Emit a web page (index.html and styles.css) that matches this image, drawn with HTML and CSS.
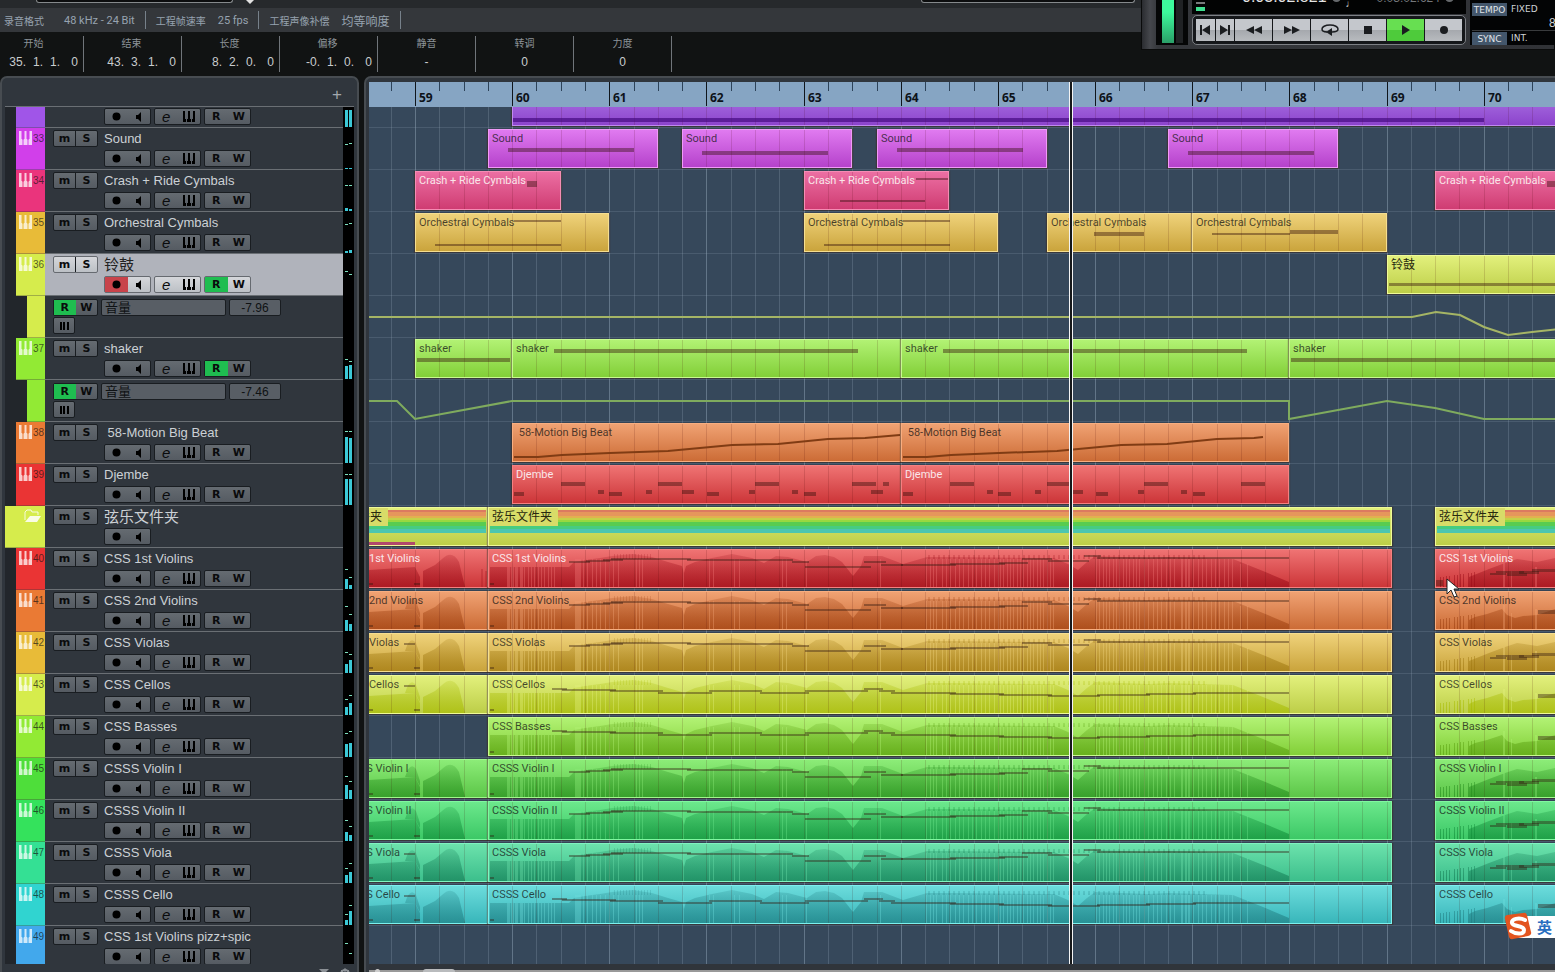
FILE: index.html
```
<!DOCTYPE html>
<html lang="zh-CN">
<head>
    <meta charset="UTF-8">
    <meta name="viewport" content="width=device-width, initial-scale=1.0">
    <title>Project</title>
    <link rel="stylesheet" href="styles.css">
</head>
<body>
    <header class="toolbar">
        <div class="toolbar-box"></div>
        <span class="toolbar-arrow"></span>
        <div class="toolbar-box toolbar-box-right"></div>
    </header>
    <div class="status">
        <div class="status-item"><span class="status-label">录音格式</span><span>48 kHz - 24 Bit</span></div>
        <div class="status-item"><span class="status-label">工程帧速率</span><span>25 fps</span></div>
        <div class="status-item"><span class="status-label">工程声像补偿</span><span class="status-cjk">均等响度</span></div>
    </div>
    <div class="info">
        <div class="info-item"><span class="info-label">开始</span><div class="pos"><span>35.</span><span>1.</span><span>1.</span><span>0</span></div></div>
        <div class="info-item"><span class="info-label">结束</span><div class="pos"><span>43.</span><span>3.</span><span>1.</span><span>0</span></div></div>
        <div class="info-item"><span class="info-label">长度</span><div class="pos"><span>8.</span><span>2.</span><span>0.</span><span>0</span></div></div>
        <div class="info-item"><span class="info-label">偏移</span><div class="pos"><span>-0.</span><span>1.</span><span>0.</span><span>0</span></div></div>
        <div class="info-item"><span class="info-label">静音</span><div>-</div></div>
        <div class="info-item"><span class="info-label">转调</span><div>0</div></div>
        <div class="info-item"><span class="info-label">力度</span><div>0</div></div>
    </div>

    <main class="project">
        <section class="panel track-panel">
            <div class="track-head"><button class="add" aria-label="Add track">+</button></div>
            <div class="scroll"><div class="rows" id="tracks"></div></div>
            <div class="track-foot">
                <svg width="10" height="6"><path d="M0 1h10l-5 5z" fill="#8b9095"/></svg>
                <svg width="12" height="12" viewBox="0 0 12 12"><circle cx="6" cy="6" r="4" fill="none" stroke="#8b9095" stroke-width="2"/><path d="M6 0v12M0 6h12M2 2l8 8M10 2l-8 8" stroke="#8b9095"/><circle cx="6" cy="6" r="2" fill="#33383d"/></svg>
            </div>
        </section>
        <section class="panel event-panel">
            <svg class="ruler" id="ruler"></svg>
            <div class="scroll">
                <svg class="grid" id="grid"></svg>
                <div class="rows" id="lanes"></div>
            </div>
            <div class="hscroll"><span class="knob"></span><span class="thumb"></span></div>
            <div class="playhead"></div>
        </section>
    </main>

    <aside class="transport">
        <div class="level"><span class="level-bar"></span><span class="level-side"></span></div>
        <div class="transport-main">
            <div class="time">
                <span class="time-led"></span>
                <span class="time-big">0:03:02.821</span><span class="dot"></span>
                <span class="note">♩</span>
                <span class="time-small">0:03:02.624</span><span class="dot"></span>
            </div>
            <div class="buttons">
                <button class="narrow" aria-label="To start"><svg width="12" height="12"><path d="M1 1h2v10H1zM11 1v10L3 6z"/></svg></button>
                <button class="narrow" aria-label="To end"><svg width="12" height="12"><path d="M9 1h2v10H9zM1 1v10l8-5z"/></svg></button>
                <button aria-label="Rewind"><svg width="18" height="12"><path d="M9 2v8L1 6zM17 2v8L9 6z"/></svg></button>
                <button aria-label="Forward"><svg width="18" height="12"><path d="M1 2v8l8-4zM9 2v8l8-4z"/></svg></button>
                <button aria-label="Cycle"><svg width="18" height="14"><path d="M6 9C3 9 1 8 1 6s3-4 8-4 8 2 8 4-2 3-6 3" fill="none" stroke="#1b1d20" stroke-width="1.5"/><path d="M11 5v8L5 9z"/></svg></button>
                <button aria-label="Stop"><svg width="8" height="8"><path d="M0 0h8v8H0z"/></svg></button>
                <button class="play" aria-label="Play"><svg width="8" height="10"><path d="M0 0v10l8-5z"/></svg></button>
                <button aria-label="Record"><svg width="10" height="10"><circle cx="5" cy="5" r="4"/></svg></button>
            </div>
        </div>
        <div class="tempo">
            <div class="tempo-row"><button>TEMPO</button><span>FIXED</span></div>
            <div class="tempo-value">80.000</div>
            <div class="tempo-row sync"><button>SYNC</button><span>INT.</span></div>
        </div>
    </aside>

    <svg class="cursor" width="14" height="20"><path d="M1 1v15l4-4 3 7 3-1-3-7h5z" fill="#fff" stroke="#222"/></svg>
    <div class="ime">
        <svg width="28" height="28" viewBox="0 0 28 28"><path d="M3 3Q0 4 1 7l4 18q1 3 4 2l15-3q4-1 3-4L23 3q-1-3-4-2z" fill="#e3541f"/><path d="M21 8C15 5 7 7 8 11s12 2 12 7-9 4-13 1" fill="none" stroke="#fff" stroke-width="4" stroke-linecap="round"/></svg>
        <span>英</span>
    </div>
    <script src="script.js"></script>
</body>
</html>
```
FILE: styles.css
```
* {
    box-sizing: border-box;
}
body {
    margin: 0;
    height: 100vh;
    overflow: hidden;
    display: flex;
    flex-direction: column;
    background-color: #111313;
    color: #c3c8cc;
    font-family: "Liberation Sans", "Noto Sans CJK SC", sans-serif;
    font-size: 12px;
}
button, input, select {
    font: inherit;
    color: inherit;
    margin: 0;
    padding: 0;
    border: none;
    background: none;
    appearance: none;
}
.toolbar {
    height: 8px;
    flex: none;
    display: flex;
    align-items: flex-start;
    padding-left: 36px;
    background-color: #26292c;
}
.toolbar-box {
    width: 197px;
    height: 3px;
    border: 1px solid #85898c;
    border-top: none;
    border-radius: 0 0 5px 5px;
    background-color: #0c0d0e;
}
.toolbar-box-right {
    width: 214px;
    margin-left: 667px;
}
.toolbar-arrow {
    margin-left: 13px;
    border: 4px solid transparent;
    border-top-color: #e2e2e2;
    border-bottom: none;
}
.status {
    height: 24px;
    flex: none;
    display: flex;
    align-items: center;
    background-color: #34373b;
    color: #97a3b0;
    font-family: Roboto, "Noto Sans CJK SC", sans-serif;
}
.status-item {
    height: 18px;
    display: flex;
    align-items: center;
    gap: 12px;
    padding: 0 10px;
    border-right: 1px solid #77818b;
    font-size: 11px;
}
.status-item:first-child {
    padding-left: 4px;
    gap: 20px;
}
.status-label {
    font-size: 10px;
}
.status-cjk {
    font-size: 12px;
}
.info {
    height: 44px;
    flex: none;
    display: flex;
    padding: 4px 0;
}
.info-item {
    width: 98px;
    height: 36px;
    padding-top: 1px;
    border-right: 1px solid #70757a;
    text-align: center;
    line-height: 18px;
    color: #c9ccce;
}
.info-item:first-child {
    width: 84px;
}
.info-label {
    display: block;
    padding-right: 2px;
    font-size: 10px;
    line-height: 14px;
    margin-bottom: 2px;
    color: #8d9499;
}
.info-item:first-child .info-label {
    padding-right: 16px;
}
.info-item:nth-child(n+5) .info-label {
    padding-right: 0;
}
.pos {
    display: flex;
    justify-content: flex-end;
    padding-right: 5px;
}
.pos span {
    min-width: 17px;
    text-align: right;
}
.pos span:last-child {
    min-width: 18px;
}

.project {
    flex: 1;
    min-height: 0;
    display: flex;
    gap: 5px;
}
.panel {
    display: flex;
    flex-direction: column;
    border: 2px solid #474c51;
    border-bottom: none;
    border-radius: 7px 7px 0 0;
    background-color: #30363d;
    overflow: hidden;
}
.track-panel {
    width: 359px;
    flex: none;
    padding: 0 3px;
}
.event-panel {
    position: relative;
    flex: 1;
    min-width: 0;
    border-right: none;
    border-top-right-radius: 0;
    padding: 4px 0 0 3px;
}
.track-head {
    height: 29px;
    flex: none;
    display: flex;
    justify-content: flex-end;
    align-items: center;
    padding-right: 12px;
    border-bottom: 1px solid #6a6f74;
}
.add {
    padding-top: 5px;
    font-size: 17px;
    line-height: 18px;
    color: #a3a8ad;
}
.scroll {
    flex: 1;
    min-height: 0;
    position: relative;
    overflow: hidden;
}
.rows {
    margin-top: -21px;
}
.track-foot {
    height: 8px;
    flex: none;
    display: flex;
    gap: 10px;
    justify-content: flex-end;
    padding: 4px 3px 0 0;
}

/* track list */
.track {
    height: 42px;
    display: flex;
    background-color: #22262b;
}
.chip {
    width: 29px;
    margin-left: 11px;
    display: flex;
    align-items: flex-start;
    padding: 3px 1px 0 3px;
    gap: 1px;
    background-color: var(--c);
    border-bottom: 1px solid rgba(60, 60, 60, .35);
    font-size: 10px;
    line-height: 16px;
    color: rgba(20, 20, 20, .7);
}
.auto .chip {
    width: 18px;
    margin-left: 22px;
}
.folder .chip {
    width: 40px;
    margin-left: 0;
    padding-left: 18px;
}
.track-body {
    flex: 1;
    display: grid;
    grid-template-columns: 51px auto;
    grid-template-rows: 20px 17px;
    align-content: start;
    padding: 2px 0 0 8px;
    background-color: #30363d;
    border-bottom: 1px solid #6a6f74;
}
.track.selected .track-body {
    background-color: #b0b3bb;
    color: #222;
}
.name {
    font-size: 13px;
    line-height: 18px;
    white-space: pre;
    color: #ccd1d5;
}
.cjk {
    font-size: 15px;
}
.selected .name {
    color: #222;
}
.group {
    display: flex;
    height: 17px;
    width: 45px;
    border: 1px solid #191d21;
    border-radius: 2px;
    background: linear-gradient(#656b71, #555b62);
    color: #0a0b0c;
}
.group button {
    flex: 1;
    display: flex;
    align-items: center;
    justify-content: center;
    font-family: "DejaVu Sans", sans-serif;
    font-size: 11px;
    font-weight: bold;
    line-height: 14px;
}
.ms button + button {
    border-left: 1px solid #191d21;
}
.controls {
    grid-column: 2;
    display: flex;
    gap: 3px;
}
.controls .group {
    width: 47px;
}
.selected .group {
    background: linear-gradient(#d5d7db, #bcc0c5);
    border-color: #666a70;
}
.group .on {
    background-color: #1fbd50;
}
.group .rec {
    background-color: #c8434a;
}
.group .edit {
    font-family: "Liberation Sans", sans-serif;
    font-size: 15px;
    font-style: italic;
    font-weight: normal;
}
.auto .track-body {
    grid-template-columns: 45px auto;
    grid-template-rows: 17px 17px;
    gap: 1px 3px;
    padding-top: 3px;
}
.auto .group.small {
    width: 22px;
}
.auto-fields {
    display: flex;
    gap: 3px;
}
.param, .value {
    height: 17px;
    width: 125px;
    padding: 0 3px;
    border: 1px solid #191d21;
    border-radius: 2px;
    background-color: #585e65;
    color: #0f1214;
    font-size: 13px;
    line-height: 14px;
}
.value {
    width: 52px;
    font-size: 12px;
    text-align: center;
}
.meter {
    width: 11px;
    background-color: #000;
}

/* arrangement */
.ruler {
    display: block;
    width: 100%;
    height: 25px;
    flex: none;
    background-color: #86a5c3;
}
.ruler text {
    font-family: "Open Sans", sans-serif;
    font-size: 12px;
    font-weight: bold;
    fill: #0d1218;
}
.event-panel .scroll {
    background-color: #36485b;
}
.grid {
    position: absolute;
    left: 0;
    top: 0;
    width: 100%;
    height: 100%;
}
.lane {
    position: relative;
    height: 42px;
    border-bottom: 1px solid rgba(150, 170, 190, .2);
    overflow: hidden;
}
.curve {
    display: block;
    width: 100%;
    height: 42px;
}
.clip {
    position: absolute;
    top: 1px;
    height: 39px;
    border: 1px solid var(--edge);
    background: linear-gradient(var(--hi), var(--lo));
    box-shadow: 0 1px 1px 1px rgba(60, 40, 30, .5);
    overflow: hidden;
}
.clip svg {
    position: absolute;
    left: -1px;
    top: -1px;
    width: 100%;
    height: 39px;
    overflow: visible;
}
.clip-name {
    position: relative;
    display: inline-block;
    padding: 0 3px;
    font-family: Roboto, "Noto Sans CJK SC", sans-serif;
    font-size: 11px;
    line-height: 18px;
    white-space: pre;
    color: rgba(20, 20, 20, .75);
}
.clip-name.light {
    color: #fae6ea;
}
.clip-name.cjk {
    font-size: 12px;
    color: #27280f;
}
.clip-name.boxed {
    padding-right: 6px;
    background-color: #d8dc68;
}
.playhead {
    position: absolute;
    top: 4px;
    bottom: 8px;
    left: 703px;
    width: 4px;
    border: solid #f4f4f4;
    border-width: 0 1px;
    background-color: #16181a;
}
.hscroll {
    height: 8px;
    flex: none;
    display: flex;
    align-items: flex-start;
    padding: 5px 0 0 6px;
    gap: 43px;
    background: linear-gradient(#30353b 6px, #999 6px);
}
.knob {
    width: 5px;
    height: 5px;
    border-radius: 3px;
    background-color: #ccc;
}
.thumb {
    width: 32px;
    height: 6px;
    border-radius: 3px;
    background-color: #b9bbbd;
}

/* floating transport window */
.transport {
    position: absolute;
    right: 0;
    top: -20px;
    width: 414px;
    height: 70px;
    display: flex;
    gap: 4px;
    padding: 0 0 4px 14px;
    background: linear-gradient(90deg, #2a2c30, #45474c 8px, #35373b 16px, #303236);
    border: 1px solid #0a0b0b;
}
.level {
    width: 32px;
    flex: none;
    display: flex;
    justify-content: space-between;
    padding: 0 5px 2px 6px;
    background-color: #050606;
}
.level-bar {
    width: 12px;
    background: linear-gradient(#3dfa9c 50%, #2a9f68);
}
.level-side {
    width: 7px;
    background-color: #202224;
}
.transport-main {
    width: 274px;
    flex: none;
    display: flex;
    flex-direction: column;
    gap: 1px;
}
.time {
    height: 34px;
    display: flex;
    align-items: flex-end;
    gap: 5px;
    padding: 0 6px 3px 4px;
    background-color: #020303;
    color: #e5e5e5;
}
.time-led {
    width: 9px;
    height: 9px;
    border-top: 2px solid #77797b;
    border-bottom: 4px solid #3fe090;
}
.time-big {
    margin: 0 0 5px 32px;
    font-size: 16px;
    line-height: 18px;
}
.time-small {
    margin: 0 0 5px 16px;
    font-size: 12px;
    line-height: 16px;
    color: #74777a;
}
.dot {
    width: 9px;
    height: 9px;
    margin-bottom: 9px;
    border-radius: 5px;
    background-color: #66696c;
}
.note {
    font-size: 10px;
    line-height: 14px;
}
.buttons {
    height: 30px;
    display: flex;
    gap: 1px;
    padding: 3px;
    border: 1px solid #7d8085;
    border-radius: 5px;
    background-color: #15171a;
}
.buttons button {
    flex: 2;
    display: flex;
    align-items: center;
    justify-content: center;
    background: linear-gradient(#c4c7cc 50%, #a5a8ad 50%, #b8bbbf);
    fill: #1b1d20;
}
.buttons .narrow {
    flex: 1;
}
.buttons .play {
    background: linear-gradient(#67df51 50%, #4ecb3b 50%);
}
.tempo {
    flex: 1;
    padding: 22px 0 0 2px;
    background-color: #030405;
    font-family: "DejaVu Sans", sans-serif;
    font-size: 9px;
    color: #d0d3d5;
}
.tempo-row {
    display: flex;
    gap: 4px;
    line-height: 12px;
}
.tempo-row button {
    width: 35px;
    height: 13px;
    background-color: #43566b;
    color: #e0e4e8;
    text-align: center;
}
.tempo-value {
    height: 15px;
    padding-left: 77px;
    border-bottom: 1px solid #393b3d;
    font-family: "Liberation Sans", sans-serif;
    font-size: 12px;
    line-height: 14px;
}
.tempo-row.sync {
    padding-top: 1px;
}
.cursor {
    position: absolute;
    left: 1446px;
    top: 578px;
}
.ime {
    position: absolute;
    right: 0;
    bottom: 32px;
    display: flex;
    align-items: center;
    gap: 5px;
    padding-right: 3px;
    background: linear-gradient(90deg, transparent 14px, #fff 14px) 0 4px / 100% 22px no-repeat;
    color: #2a6ec0;
    font-size: 15px;
    font-weight: bold;
}
```
FILE: script.js
```
const BAR = 97.16;      // pixels per bar
const ORIGIN = 46;      // x of bar 59
const RIGHT = 72;       // clips that run past the window end here

function barX(bar) {
    return Math.round(ORIGIN + (bar - 59) * BAR);
}

const colors = {
    purple:  { c: '#a055e8', hi: '#b07ae8', lo: '#8c44cc', edge: '#c08af0' },
    magenta: { c: '#d13fea', hi: '#e07af0', lo: '#b542cb', edge: '#f09af8' },
    pink:    { c: '#ea347c', hi: '#ec6fa3', lo: '#cf3c72', edge: '#f58cb4' },
    gold:    { c: '#e8bb38', hi: '#efd27a', lo: '#caa43c', edge: '#f5de90', dark: '#a07810' },
    yellow:  { c: '#d6ec4c', hi: '#e2f07c', lo: '#bdce48', edge: '#effa98', dark: '#a8bc00' },
    lime:    { c: '#92ea34', hi: '#b2f274', lo: '#82cf38', edge: '#c8fa90', dark: '#5aa010' },
    orange:  { c: '#ea7a34', hi: '#f0a273', lo: '#cc6c36', edge: '#f8ae80', dark: '#9e4010' },
    red:     { c: '#ea3434', hi: '#ef7373', lo: '#cc3538', edge: '#f58080', dark: '#9c0c18' },
    green:   { c: '#4ede3a', hi: '#8cec78', lo: '#5cc648', edge: '#a0f88c', dark: '#248c1c' },
    emerald: { c: '#34e25c', hi: '#6ce88c', lo: '#3cc866', edge: '#80f8a0', dark: '#108c38' },
    mint:    { c: '#34e094', hi: '#6ce2ac', lo: '#3cbf8c', edge: '#80f4c0', dark: '#147c54' },
    cyan:    { c: '#30d4d0', hi: '#6cdcdc', lo: '#38b6ba', edge: '#7cf0ee', dark: '#207c80' },
    blue:    { c: '#42a8ec' }
};

const soundA = [[20, 19, 126, 4]];
const soundB = [[20, 22, 126, 4]];
const djembe = [[2, 27, 10, 4], [49, 17, 24, 4], [86, 25, 6, 4], [97, 27, 13, 4], [134, 25, 6, 4],
    [146, 17, 24, 4], [170, 25, 12, 4], [195, 27, 12, 4], [237, 25, 6, 4], [243, 17, 24, 4],
    [280, 25, 6, 4], [292, 27, 12, 4], [340, 17, 24, 4], [359, 25, 12, 4], [371, 17, 6, 4]];
const beat = [[2, 34], [26, 34], [50, 32], [98, 30], [156, 28], [220, 22], [266, 21], [316, 16], [353, 15], [388, 12]];
const orch = [[20, 31, 126, 2], [99, 7, 47, 2]];

// meter: [left level, right level, left peak, right peak], measured from the bottom
const tracks = [
    { color: 'purple', noHead: true, meter: [17, 17, 0, 0], clips: [{ from: 60, to: RIGHT, notes: [[1, 31, 971, 4]] }] },
    { num: 33, name: 'Sound', color: 'magenta', meter: [1, 1, 25, 26], clips: [
        { from: 59.75, to: 61.5, notes: soundA }, { from: 61.75, to: 63.5, notes: soundB },
        { from: 63.75, to: 65.5, notes: soundA }, { from: 66.75, to: 68.5, notes: soundB }] },
    { num: 34, name: 'Crash + Ride Cymbals', color: 'pink', light: true, meter: [3, 2, 26, 26], clips: [
        { from: 59, to: 60.5, notes: [[112, 10, 10, 6]] },
        { from: 63, to: 64.5, notes: [[36, 29, 85, 2], [112, 7, 32, 2]] },
        { from: 69.5, to: RIGHT, notes: [[112, 10, 12, 6]] }] },
    { num: 35, name: 'Orchestral Cymbals', color: 'gold', meter: [2, 3, 29, 30], clips: [
        { from: 59, to: 61, notes: orch }, { from: 63, to: 65, notes: orch },
        { from: 65.5, to: 67, notes: [[47, 19, 50, 4]] },
        { from: 67, to: 69, notes: [[20, 20, 78, 2], [98, 17, 48, 4]] }] },
    { num: 36, name: '铃鼓', color: 'yellow', cjk: true, selected: true, read: true, meter: [0, 0, 24, 21], clips: [
        { from: 69, to: RIGHT, notes: [[2, 28, 300, 3]] }] },
    { auto: '-7.96', color: 'yellow', line: '#a5b565', curve: '0,21 1043,21 1067,16 1091,19 1115,31 1139,39 1163,36 1200,32' },
    { num: 37, name: 'shaker', color: 'lime', read: true, meter: [13, 14, 20, 18], clips: [
        { from: 59, to: 60, notes: [[2, 19, 93, 4]] }, { from: 60, to: 64, notes: [[42, 10, 304, 4]] },
        { from: 64, to: 68, notes: [[42, 10, 304, 4]] }, { from: 68, to: RIGHT, notes: [[2, 19, 400, 4]] }] },
    { auto: '-7.46', color: 'lime', line: '#7fab5e', curve: '0,21 28,21 46,39 143,21 920,21 920,39 1018,21 1066,28 1115,39 1200,39' },
    { num: 38, name: ' 58-Motion Big Beat', color: 'orange', meter: [26, 25, 32, 32], clips: [
        { from: 60, to: 64, line: beat }, { from: 64, to: 68, line: beat.slice(0, 9).concat([[362, 14]]) }] },
    { num: 39, name: 'Djembe', color: 'red', light: true, meter: [26, 26, 31, 31], clips: [
        { from: 60, to: 64, notes: djembe }, { from: 64, to: 68, notes: djembe.slice(0, 13) }] },
    { folder: true, name: '弦乐文件夹', color: 'yellow', cjk: true, clips: [
        { from: 58, to: 59.75, mark: true }, { from: 59.75, to: 69.06 }, { from: 69.5, to: RIGHT }] },
    { num: 40, name: 'CSS 1st Violins', color: 'red', light: true, strings: 'high', meter: [10, 4, 20, 12] },
    { num: 41, name: 'CSS 2nd Violins', color: 'orange', strings: 'high', low: true, meter: [11, 7, 25, 17] },
    { num: 42, name: 'CSS Violas', color: 'gold', strings: 'high', meter: [9, 13, 21, 19] },
    { num: 43, name: 'CSS Cellos', color: 'yellow', strings: 'low', low: true, meter: [8, 12, 16, 20] },
    { num: 44, name: 'CSS Basses', color: 'lime', strings: 'low', low: true, noIntro: true, meter: [13, 14, 24, 26] },
    { num: 45, name: 'CSSS Violin I', color: 'green', strings: 'high', meter: [14, 9, 23, 18] },
    { num: 46, name: 'CSSS Violin II', color: 'emerald', strings: 'high', meter: [9, 6, 21, 15] },
    { num: 47, name: 'CSSS Viola', color: 'mint', strings: 'high', meter: [8, 11, 15, 20] },
    { num: 48, name: 'CSSS Cello', color: 'cyan', strings: 'low', low: true, meter: [5, 14, 11, 20] },
    { num: 49, name: 'CSS 1st Violins pizz+spic', color: 'blue', meter: [0, 0, 24, 14], clips: [] }
];

// controller envelope of the string parts and the gaps in it: [from, to, step, width]
const envelope = '2,38 2,18 81,18 86,13 97,11 112,9 124,7 145,5 164,8 180,13 194,17 196,24 198,17 207,13 224,9 244,5 264,9 276,14 288,7 300,8 319,13 328,7 337,6 346,8 354,13 365,27 373,17 376,7 394,7 415,15 439,8 464,8 566,9 580,15 590,21 599,13 607,7 660,9 680,8 745,10 775,22 801,33 801,38';
const gaps = [[19, 34, 4, 3], [36, 70, 3, 1], [87, 91, 2, 3], [95, 134, 4, 1], [148, 156, 3, 1], [195, 197, 2, 1],
    [221, 226, 4, 1], [246, 252, 4, 1], [294, 301, 3, 1], [318, 320, 3, 1], [392, 393, 3, 1], [438, 452, 3, 1], [454, 512, 4, 1],
    [512, 566, 3, 1], [608, 654, 3, 1], [656, 690, 4, 1], [693, 702, 3, 2], [705, 748, 4, 1], [752, 760, 7, 1]];
const highLine = [[81, 12, 21], [98, 11, 24], [115, 10, 20], [123, 9, 80], [199, 10, 106], [304, 12, 17], [317, 17, 66],
    [376, 12, 22], [393, 15, 22], [413, 15, 55], [462, 14, 55], [511, 13, 29], [534, 9, 30], [560, 11, 41],
    [596, 6, 17], [609, 8, 192]];
const lowLine = [[64, 13, 15], [74, 14, 54], [122, 15, 53], [170, 17, 54], [221, 15, 53], [272, 17, 49], [317, 15, 63],
    [376, 13, 19], [391, 15, 16], [403, 17, 65], [462, 18, 54], [511, 19, 53], [560, 20, 52], [609, 19, 53],
    [658, 18, 50], [705, 17, 96]];

function rects(list, fill) {
    return list.map(n => `<rect x="${n[0]}" y="${n[1]}" width="${n[2]}" height="${n[3] || 2}" fill="${fill}"/>`).join('');
}

function stringClips(t) {
    const col = colors[t.color];
    const dark = col.dark;
    const note = 'rgba(50,25,15,.4)';
    const fade = `<defs><linearGradient id="f${t.num}" x1="0" y1="0" x2="0" y2="39" gradientUnits="userSpaceOnUse"><stop offset="0" stop-color="${dark}" stop-opacity=".12"/><stop offset="1" stop-color="${dark}" stop-opacity=".66"/></linearGradient></defs>`;
    const fill = `fill="url(#f${t.num})"`;
    let stripes = '';
    gaps.forEach(g => {
        let i = g[0];
        for (let x = g[0]; x < g[1]; x += g[2] + (i % 3 === 0 ? 1 : 0), i++) {
            const top = x < 86 ? 18 : x > 745 ? 15 : 10;
            stripes += `<path d="M${x} ${top}h${g[3]}V38h-${g[3]}z"/>`;
        }
    });
    // thin spikes above the filled area
    let spikes = '';
    for (let x = 126; x < 165; x += 3) spikes += `M${x} 5h1v5h-1z`;
    for (let x = 440; x < 720; x += 5) spikes += `M${x} 6h2v4h-2z`;
    const main = fade + `<polygon points="${envelope}" ${fill}/><path d="${spikes}" ${fill}/>` +
        `<g fill="${col.hi}" opacity=".4">${stripes}</g>` +
        rects(t.strings === 'high' ? highLine.map(n => [n[0], n[1] + (t.low ? 1 : 0), n[2]]) : lowLine, note) +
        rects([[2, 34, 4, 2]], note);

    const o = barX(58.25);
    const intro = `<g transform="translate(${-o} 0)"><path d="M0 38V21L46 18l5 10v10zM54 38V22l12-6 7-6q10-10 17 3l6 25z" ${fill}/>` +
        (t.light ? '' : `<path d="M36 18q5-16 11-8l4 12v5l-5-9z" ${fill}/>`) +
        (t.light ? `<path d="M113 20v18M117 22v16" stroke="${dark}" opacity=".5"/>` : '') +
        rects([[0, 34, 4, 2], [45, 34, 6, 2]], note) + (t.name.length < 12 ? rects([[35, 10, 11, 2]], note) : '') + '</g>';

    let bars = '';
    for (let x = 5; x < 42; x += (x % 7 ? 3 : 5)) bars += `M${x} 38V${29 - Math.round(x / 7)}h1V38z`;
    const hill = t.low ? 'M34 38V29l6-3 12-3 6-2 9-3 5 6 8 3 8-2 14-1 18-6 60-8v32z' : 'M34 38V28l20-8 16-6 12-4 20 3 18-4 60-4v33z';
    const tail = (t.low ? [[103, 19, 40, 4]] : [[55, 24, 16, 2], [61, 22, 28, 2], [72, 24, 20, 3], [84, 22, 20, 3], [97, 20, 50, 3]]);
    const outro = `<path d="${bars}" ${fill}/><path d="${hill}" ${fill}/><g fill="${col.hi}" opacity=".4"><path d="M68 14h2v24h-2zM76 22h1v16h-1zM100 18h2v20h-2z"/></g>` +
        rects(tail, note) + (t.num === 40 ? rects([[1, 31, 7, 6]], note) : '');

    const list = [{ from: 59.75, to: 69.06, art: main }, { from: 69.5, to: RIGHT, art: outro }];
    if (!t.noIntro) list.unshift({ from: 58.25, to: 59.75, art: intro });
    return list;
}

const bands = [['#dc7a60', 3, 2], ['#e6965c', 5, 4], ['#e2b050', 9, 2], ['#c4d048', 11, 2], ['#98d840', 13, 2], ['#58cc50', 15, 4], ['#46cc80', 19, 3], ['#4cc6b0', 22, 4]];

function clipHtml(t, clip) {
    const x = barX(clip.from);
    const w = barX(clip.to) - x;
    const col = colors[t.color];
    let art = clip.art || '';
    if (t.folder) {
        art = bands.map(b => `<rect x="2" y="${b[1]}" width="${w - 4}" height="${b[2]}" fill="${b[0]}"/>`).join('');
        if (clip.mark) art += `<rect y="35" width="${barX(59) - x}" height="3" fill="#b0486c"/>`;
    } else {
        for (let b = Math.floor(clip.from * 4 + 1) / 4; b < clip.to; b += .25) {
            art += `<path d="M${barX(b) - x + .5} 1V38" stroke="#400" opacity=".14"/>`;
        }
    }
    if (clip.notes) art += rects(clip.notes, t.noHead ? 'rgba(70,10,130,.7)' : 'rgba(50,15,10,.42)');
    if (clip.line) art += `<polyline points="${clip.line.join(' ')}" fill="none" stroke="#803c14" stroke-width="2"/>`;
    const cls = ['clip-name', t.light ? 'light' : '', t.cjk ? 'cjk' : '', t.folder ? 'boxed' : ''].join(' ');
    return `<div class="clip" style="left:${x}px;width:${w}px;--hi:${col.hi};--lo:${col.lo};--edge:${col.edge}"><svg>${art}</svg><span class="${cls}">${t.noHead ? '' : t.name}</span></div>`;
}

const piano = '<svg width="13" height="14"><path d="M0 0h13v14H0z" fill="#fff" opacity=".75"/><path d="M3 0h2v8H3zM8 0h2v8H8zM4 8v6M9 8v6" fill="var(--c)" stroke="var(--c)" stroke-width="1"/></svg>';
const folderIcon = '<svg width="19" height="15" viewBox="0 0 19 15"><path d="M2 11V3l2-2h4l1 2h6v3" fill="none" stroke="#fff" opacity=".8"/><path d="M2 13l5-6h11l-4 6z" fill="#fff" opacity=".85"/></svg>';
const recIcon = '<svg width="9" height="9"><circle cx="4.5" cy="4.5" r="4"/></svg>';
const speaker = '<svg width="6" height="10"><path d="M0 3h2l3-3v10L2 7H0z"/></svg>';
const keys = '<svg width="12" height="11"><path d="M0 0h2v8H0zM5 0h2v8H5zM10 0h2v8h-2zM0 8h3v3H0zM4 8h4v3H4zM9 8h3v3H9z"/></svg>';

function meterHtml(m) {
    if (!m) return '<div class="meter"></div>';
    const bar = (x, h) => `<rect x="${x}" y="${41 - h}" width="3" height="${h}" fill="#3cc8d6"/>`;
    const peak = (x, h) => h ? `<rect x="${x}" y="${41 - h}" width="3" height="1" fill="#7ce0c0"/>` : '';
    return `<div class="meter"><svg width="11" height="42">${bar(2, m[0])}${bar(6, m[1])}${peak(2, m[2])}${peak(6, m[3])}</svg></div>`;
}

function trackHtml(t) {
    const style = `style="--c:${colors[t.color].c}"`;
    if (t.auto) {
        return `<div class="track auto" ${style}><div class="chip"></div><div class="track-body">
            <div class="group"><button class="on">R</button><button>W</button></div>
            <div class="auto-fields"><select class="param" aria-label="参数"><option>音量</option></select><input class="value" aria-label="音量" value="${t.auto}"></div>
            <div class="group small"><button aria-label="Lanes"><svg width="9" height="8"><path d="M0 0h2v8H0zM3 0h2v8H3zM7 0h2v8H7z"/></svg></button></div>
        </div>${meterHtml()}</div>`;
    }
    const more = t.folder ? '' : `<div class="group"><button class="edit">e</button><button aria-label="Instrument">${keys}</button></div>
        <div class="group"><button class="${t.read ? 'on' : ''}">R</button><button>W</button></div>`;
    return `<div class="track ${t.folder ? 'folder' : ''} ${t.selected ? 'selected' : ''}" ${style}>
        <div class="chip">${t.noHead ? '' : t.folder ? folderIcon : piano + t.num}</div>
        <div class="track-body">
            ${t.noHead ? '<span></span><span></span>' : `<div class="group ms"><button>m</button><button>S</button></div><span class="name ${t.cjk ? 'cjk' : ''}">${t.name}</span>`}
            <div class="controls"><div class="group"><button class="${t.selected ? 'rec' : ''}" aria-label="Record">${recIcon}</button><button aria-label="Monitor">${speaker}</button></div>${more}</div>
        </div>${meterHtml(t.meter)}</div>`;
}

function laneHtml(t) {
    if (t.curve) {
        return `<div class="lane"><svg class="curve"><polyline points="${t.curve}" fill="none" stroke="${t.line}" stroke-width="2"/></svg></div>`;
    }
    const clips = t.strings ? stringClips(t) : t.clips;
    return `<div class="lane">${clips.map(c => clipHtml(t, c)).join('')}</div>`;
}

document.getElementById('tracks').innerHTML = tracks.map(trackHtml).join('');
document.getElementById('lanes').innerHTML = tracks.map(laneHtml).join('');

function drawRuler() {
    const width = document.getElementById('ruler').clientWidth;
    let ruler = '';
    let grid = '';
    for (let b = 58.75; barX(b) < width; b += .25) {
        const whole = b % 1 === 0;
        const x = barX(b) + .5;
        ruler += `<path d="M${x} 0V${whole ? 24 : 9}" stroke="${whole ? '#10161c' : '#2c4258'}"/>`;
        if (whole) ruler += `<text x="${barX(b) + 4}" y="20">${b}</text>`;
        grid += `<path d="M${x} 0V2000" stroke="#8fa3b5" opacity="${whole ? .5 : .28}"/>`;
    }
    document.getElementById('ruler').innerHTML = ruler;
    document.getElementById('grid').innerHTML = grid;
}
drawRuler();
window.addEventListener('resize', drawRuler);
```
